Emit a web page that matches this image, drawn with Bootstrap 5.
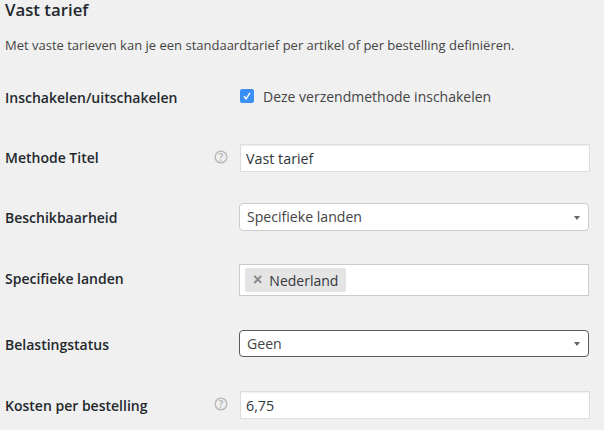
<!DOCTYPE html>
<html lang="nl">
<head>
<meta charset="utf-8">
<title>Vast tarief</title>
<link href="https://cdn.jsdelivr.net/npm/bootstrap@5.3.0/dist/css/bootstrap.min.css" rel="stylesheet">
<style>
html, body { height: 430px; overflow: hidden; }
body { background: #f0f0f0; color: #23282d; font-family: "Open Sans", "Liberation Sans", sans-serif; font-size: 14px; padding: 0 14px 0 5px; }
.page-title { font-size: 16.8px; font-weight: 600; line-height: 20px; margin: 0; color: #23282d; }
.intro { font-size: 13px; line-height: 18px; color: #444; margin: 16px 0 0; }
.setting-row { height: 28px; }
.setting-label { width: 205px; flex: none; font-size: 14px; font-weight: 600; color: #23282d; margin: 0; }
.label-up1 { margin-bottom: 2px; }
.label-up2 { margin-bottom: 4px; }
.label-down1 { margin-top: 2px; }
.setting-field { width: 350px; flex: none; margin-left: 30px; }
.plain-input { width: 350px; height: 28px; border: 1px solid #ddd; border-radius: 0; background: #fff; color: #32373c; font-size: 14.3px; padding: 0 5px; line-height: 26px; box-shadow: inset 0 1px 2px rgba(0,0,0,.07); }
.plain-input:focus { border-color: #ddd; box-shadow: none; }
.pick-box { width: 350px; margin-left: -1px; height: 28px; background: #fff; border: 1px solid #ccc; border-radius: 4px; color: #444; font-size: 14.1px; padding: 0 8px 0 7px; line-height: 26px; }
.pick-box.is-active { border-color: #5b5b5b; height: 27px; }
.pick-caret { width: 0; height: 0; border-left: 3px solid transparent; border-right: 3px solid transparent; border-top: 4px solid #666; margin-top: 1px; }
.tag-box { width: 350px; margin-left: -1px; height: 32px; background: #fff; border: 1px solid #ccc; padding: 3px 5px; }
.tag-item { background: #e4e4e4; border-radius: 2px; height: 24px; padding: 0 8px; gap: 7px; color: #32373c; }
.tag-x { color: #888; font-family: "Liberation Sans", sans-serif; font-weight: 700; font-size: 16px; line-height: 1; }
.check-box { width: 14px; height: 14px; background: #3a8ff7; border-radius: 2px; flex: none; }
.check-line { gap: 9px; color: #444; font-size: 14px; margin-top: -2px; }
.help-mark { left: -26px; top: 6px; }
.r1 { margin-top: 29px; }
.r2 { margin-top: 33px; }
.r3 { margin-top: 31px; }
.r4 { margin-top: 35px; }
.r5 { margin-top: 36px; height: 27px; }
.r6 { margin-top: 34px; }
</style>
</head>
<body>
<h1 class="page-title">Vast tarief</h1>
<p class="intro">Met vaste tarieven kan je een standaardtarief per artikel of per bestelling definiëren.</p>

<form>
  <div class="setting-row d-flex align-items-center r1">
    <label class="setting-label">Inschakelen/uitschakelen</label>
    <div class="setting-field check-line d-flex align-items-center">
      <span class="check-box d-flex align-items-center justify-content-center">
        <svg width="10" height="10" viewBox="0 0 10 10"><path d="M2 5.3 4.1 7.8 8 1.8" fill="none" stroke="#fff" stroke-width="1.4"/></svg>
      </span>
      <span>Deze verzendmethode inschakelen</span>
    </div>
  </div>

  <div class="setting-row d-flex align-items-center r2">
    <label class="setting-label label-up1">Methode Titel</label>
    <div class="setting-field position-relative">
      <svg class="position-absolute help-mark" width="14" height="14" viewBox="0 0 14 14"><circle cx="7" cy="7" r="5.8" fill="none" stroke="#bbb" stroke-width="1.5"/><text x="7" y="10.5" text-anchor="middle" font-size="10" font-weight="700" fill="#bbb" font-family="Open Sans">?</text></svg>
      <input class="form-control plain-input" type="text" value="Vast tarief">
    </div>
  </div>

  <div class="setting-row d-flex align-items-center r3">
    <label class="setting-label">Beschikbaarheid</label>
    <div class="setting-field">
      <div class="pick-box d-flex align-items-center justify-content-between"><span>Specifieke landen</span><span class="pick-caret"></span></div>
    </div>
  </div>

  <div class="setting-row d-flex align-items-center r4">
    <label class="setting-label label-up2">Specifieke landen</label>
    <div class="setting-field">
      <div class="tag-box d-flex align-items-start"><span class="tag-item d-inline-flex align-items-center"><span class="tag-x">×</span><span>Nederland</span></span></div>
    </div>
  </div>

  <div class="setting-row d-flex align-items-center r5">
    <label class="setting-label label-down1">Belastingstatus</label>
    <div class="setting-field">
      <div class="pick-box is-active d-flex align-items-center justify-content-between"><span>Geen</span><span class="pick-caret"></span></div>
    </div>
  </div>

  <div class="setting-row d-flex align-items-center r6">
    <label class="setting-label">Kosten per bestelling</label>
    <div class="setting-field position-relative">
      <svg class="position-absolute help-mark" width="14" height="14" viewBox="0 0 14 14"><circle cx="7" cy="7" r="5.8" fill="none" stroke="#bbb" stroke-width="1.5"/><text x="7" y="10.5" text-anchor="middle" font-size="10" font-weight="700" fill="#bbb" font-family="Open Sans">?</text></svg>
      <input class="form-control plain-input" type="text" value="6,75">
    </div>
  </div>
</form>
</body>
</html>
